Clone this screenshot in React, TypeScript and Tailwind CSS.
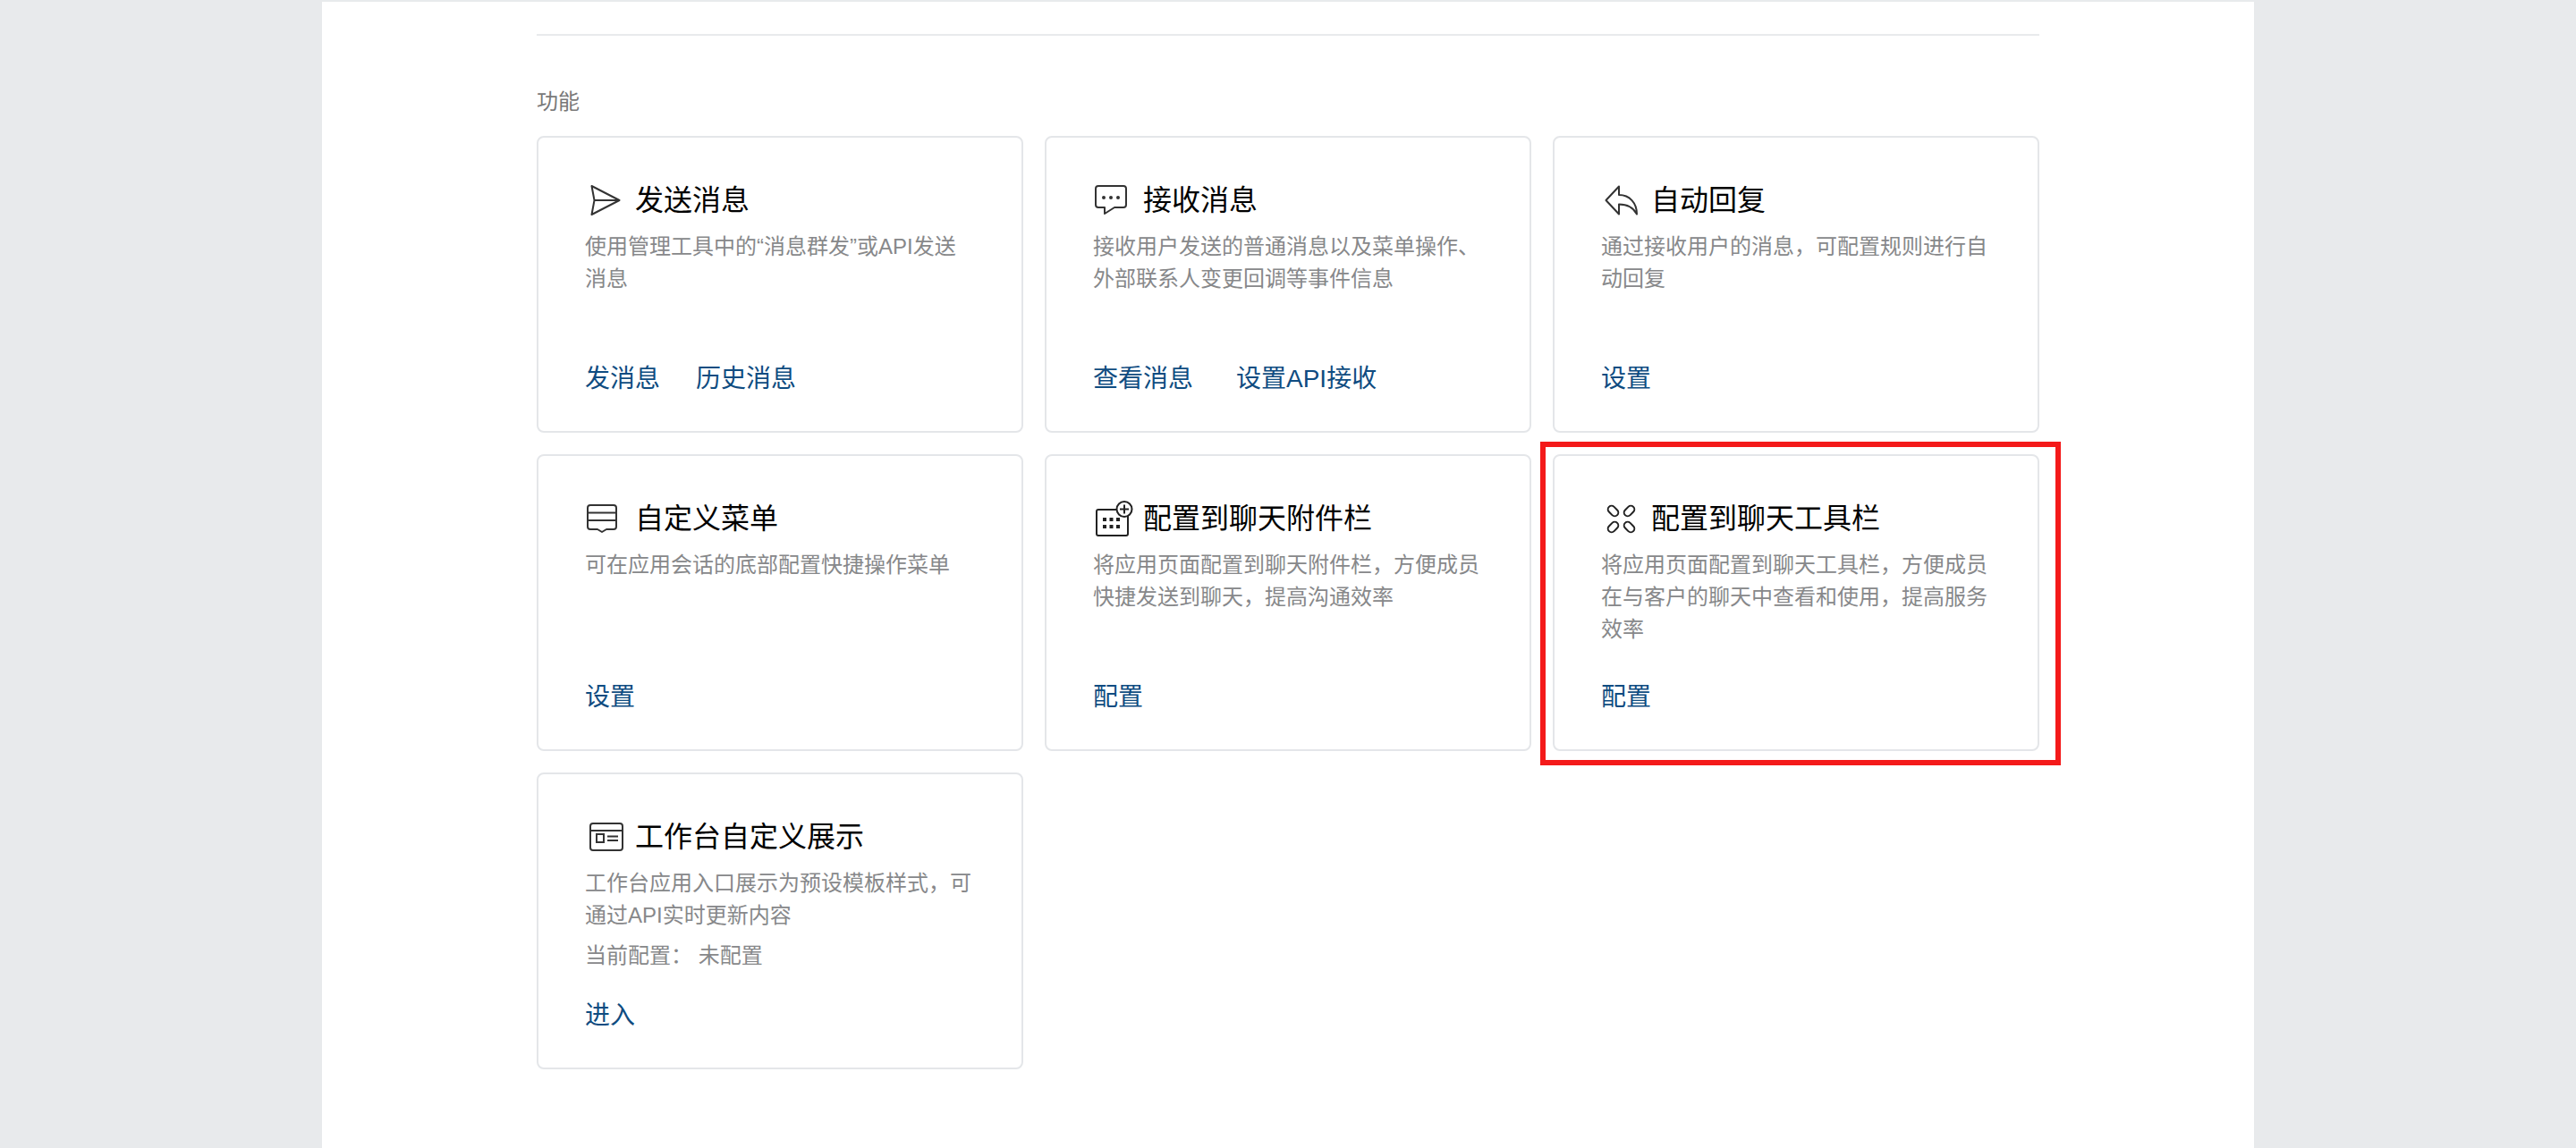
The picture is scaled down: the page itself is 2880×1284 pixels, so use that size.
// App.tsx
import React from "react"

const SendIcon = () => (
    <svg className="ml-[6px]" width="34" height="36" viewBox="0 0 34 36" fill="none" stroke="#333" strokeWidth="2" strokeLinejoin="round">
        <path d="M1.5 2 L32.5 18 L1.5 34 L4.5 18 Z M4.5 18 H32.5" />
    </svg>
)

const ChatIcon = () => (
    <svg className="ml-[2px]" width="36" height="34" viewBox="0 0 36 34" fill="none" stroke="#333" strokeWidth="2" strokeLinejoin="round">
        <path d="M4 1 H32 A3 3 0 0 1 35 4 V22 A3 3 0 0 1 32 25 H22 L11 32 V25 H4 A3 3 0 0 1 1 22 V4 A3 3 0 0 1 4 1 Z" />
        <circle cx="10" cy="14" r="2" fill="#333" stroke="none" />
        <circle cx="18" cy="14" r="2" fill="#333" stroke="none" />
        <circle cx="26" cy="14" r="2" fill="#333" stroke="none" />
    </svg>
)

const ReplyIcon = () => (
    <svg className="ml-[4px]" width="38" height="34" viewBox="0 0 38 34" fill="none" stroke="#333" strokeWidth="2" strokeLinejoin="round">
        <path d="M16 1.5 L1.5 17 L16 32.5 V21.5 C25 21.5 32 25 36 32.5 C36 20 28 11 16 11 Z" />
    </svg>
)

const MenuIcon = () => (
    <svg className="ml-[2px]" width="34" height="32" viewBox="0 0 34 32" fill="none" stroke="#333" strokeWidth="2" strokeLinejoin="round">
        <path d="M4 1 H30 A3 3 0 0 1 33 4 V25 A3 3 0 0 1 30 28 H22 L17 31 L12 28 H4 A3 3 0 0 1 1 25 V4 A3 3 0 0 1 4 1 Z M1 9.5 H33 M1 18 H33" />
    </svg>
)

const AttachIcon = () => (
    <svg className="ml-[3px]" width="42" height="40" viewBox="0 0 42 40" fill="none" stroke="#222" strokeWidth="2">
        <rect x="1" y="10" width="35" height="29" rx="2" />
        <circle cx="32" cy="9.5" r="8.5" fill="#fff" />
        <path d="M32 4.5 V14.5 M27 9.5 H37" />
        <g fill="#222" stroke="none">
            <rect x="8" y="19" width="4" height="4" />
            <rect x="15.5" y="19" width="4" height="4" />
            <rect x="23" y="19" width="4" height="4" />
            <rect x="8" y="27" width="4" height="4" />
            <rect x="15.5" y="27" width="4" height="4" />
            <rect x="23" y="27" width="4" height="4" />
        </g>
    </svg>
)

const ToolIcon = () => (
    <svg className="ml-[6px]" width="33" height="33" viewBox="0 0 33 33" fill="none" stroke="#222" strokeWidth="2">
        <rect x="1" y="3.5" width="13" height="8" rx="4" transform="rotate(45 7.5 7.5)" />
        <rect x="19" y="3.5" width="13" height="8" rx="4" transform="rotate(-45 25.5 7.5)" />
        <rect x="1" y="21.5" width="13" height="8" rx="4" transform="rotate(-45 7.5 25.5)" />
        <rect x="19" y="21.5" width="13" height="8" rx="4" transform="rotate(45 25.5 25.5)" />
    </svg>
)

const WorkbenchIcon = () => (
    <svg className="ml-[5px]" width="38" height="32" viewBox="0 0 38 32" fill="none" stroke="#333" strokeWidth="2">
        <rect x="1" y="1" width="36" height="30" rx="3" />
        <path d="M1 9 H37 M20 15.5 H32 M20 20 H32" />
        <rect x="8" y="13" width="8" height="9" />
    </svg>
)

const cards = [
    { icon: <SendIcon />, title: "发送消息", desc: "使用管理工具中的“消息群发”或API发送消息", links: ["发消息", "历史消息"], gap: "gap-[40px]" },
    { icon: <ChatIcon />, title: "接收消息", desc: "接收用户发送的普通消息以及菜单操作、外部联系人变更回调等事件信息", links: ["查看消息", "设置API接收"], gap: "gap-[48px]" },
    { icon: <ReplyIcon />, title: "自动回复", desc: "通过接收用户的消息，可配置规则进行自动回复", links: ["设置"] },
    { icon: <MenuIcon />, title: "自定义菜单", desc: "可在应用会话的底部配置快捷操作菜单", links: ["设置"] },
    { icon: <AttachIcon />, title: "配置到聊天附件栏", desc: "将应用页面配置到聊天附件栏，方便成员快捷发送到聊天，提高沟通效率", links: ["配置"] },
    { icon: <ToolIcon />, title: "配置到聊天工具栏", desc: "将应用页面配置到聊天工具栏，方便成员在与客户的聊天中查看和使用，提高服务效率", links: ["配置"], marked: true },
    { icon: <WorkbenchIcon />, title: "工作台自定义展示", desc: "工作台应用入口展示为预设模板样式，可通过API实时更新内容", extra: "当前配置： 未配置", links: ["进入"] },
]

const App: React.FC = () => {
    return (
        <div className="h-[1284px] overflow-hidden bg-[#e8eaec] pt-[2px] font-['Liberation_Sans','Noto_Sans_CJK_SC',sans-serif]">
            <div className="mx-auto h-full w-[2160px] bg-white px-[240px] pt-[36px]">
                <div className="h-[2px] bg-[#e8eaec]" />
                <div className="mt-[56px] text-[24px] leading-[36px] text-[#787878]">功能</div>
                <div className="mt-[20px] grid grid-cols-3 gap-[24px]">
                    {cards.map((card) => (
                        <div key={card.title} className="relative flex h-[332px] flex-col rounded-[8px] border-2 border-[#e4e6e9] pt-[50px] pr-[52px] pb-[38px] pl-[52px]">
                            <div className="flex h-[40px] items-center">
                                <div className="flex w-[56px] shrink-0 items-center">{card.icon}</div>
                                <span className="text-[32px] leading-[40px] text-black">{card.title}</span>
                            </div>
                            <div className="mt-[14px] text-[24px] leading-[36px] text-[#87888a]">{card.desc}</div>
                            {card.extra && (
                                <div className="mt-[9px] text-[24px] leading-[36px] whitespace-pre text-[#87888a]">{card.extra}</div>
                            )}
                            <div className={`mt-auto flex ${card.gap || ""}`}>
                                {card.links.map((link) => (
                                    <a key={link} className="text-[28px] leading-[40px] text-[#0f4c81]">{link}</a>
                                ))}
                            </div>
                            {card.marked && (
                                <div className="pointer-events-none absolute -top-[16px] -right-[26px] -bottom-[18px] -left-[16px] border-[6px] border-[#f41a1a]" />
                            )}
                        </div>
                    ))}
                </div>
            </div>
        </div>
    )
}

export default App
